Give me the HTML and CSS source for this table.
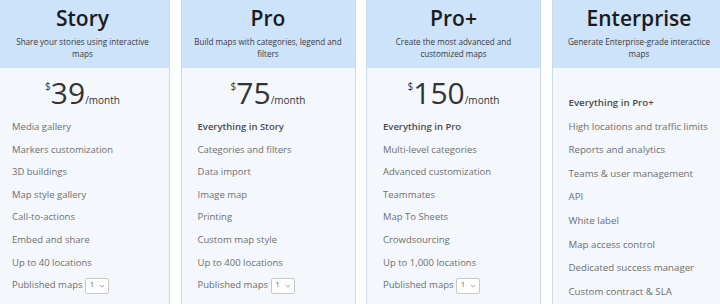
FILE: index.html
```html
<!DOCTYPE html>
<html>
<head>
<meta charset="utf-8">
<link rel="stylesheet" href="styles.css">
</head>
<body>
<div class="plans">
  <div class="card">
    <div class="head">
      <h2 class="title">Story</h2>
      <p class="sub">Share your stories using interactive maps</p>
    </div>
    <div class="body">
      <div class="price"><span class="cur">$</span><span class="amt">39</span><span class="per">/month</span></div>
      <ul class="feats">
        <li>Media gallery</li>
        <li>Markers customization</li>
        <li>3D buildings</li>
        <li>Map style gallery</li>
        <li>Call-to-actions</li>
        <li>Embed and share</li>
        <li>Up to 40 locations</li>
        <li>Published maps <span class="sel">1 <svg viewBox="0 0 8 5" width="6" height="4"><path d="M1 1l3 3 3-3" fill="none" stroke="#888" stroke-width="1"/></svg></span></li>
      </ul>
    </div>
  </div>
  <div class="card">
    <div class="head">
      <h2 class="title">Pro</h2>
      <p class="sub">Build maps with categories, legend and filters</p>
    </div>
    <div class="body">
      <div class="price"><span class="cur">$</span><span class="amt">75</span><span class="per">/month</span></div>
      <ul class="feats">
        <li class="strong">Everything in Story</li>
        <li>Categories and filters</li>
        <li>Data import</li>
        <li>Image map</li>
        <li>Printing</li>
        <li>Custom map style</li>
        <li>Up to 400 locations</li>
        <li>Published maps <span class="sel">1 <svg viewBox="0 0 8 5" width="6" height="4"><path d="M1 1l3 3 3-3" fill="none" stroke="#888" stroke-width="1"/></svg></span></li>
      </ul>
    </div>
  </div>
  <div class="card">
    <div class="head">
      <h2 class="title">Pro+</h2>
      <p class="sub">Create the most advanced and customized maps</p>
    </div>
    <div class="body">
      <div class="price"><span class="cur">$</span><span class="amt">150</span><span class="per">/month</span></div>
      <ul class="feats">
        <li class="strong">Everything in Pro</li>
        <li>Multi-level categories</li>
        <li>Advanced customization</li>
        <li>Teammates</li>
        <li>Map To Sheets</li>
        <li>Crowdsourcing</li>
        <li>Up to 1,000 locations</li>
        <li>Published maps <span class="sel">1 <svg viewBox="0 0 8 5" width="6" height="4"><path d="M1 1l3 3 3-3" fill="none" stroke="#888" stroke-width="1"/></svg></span></li>
      </ul>
    </div>
  </div>
  <div class="card">
    <div class="head">
      <h2 class="title">Enterprise</h2>
      <p class="sub">Generate Enterprise-grade interactice maps</p>
    </div>
    <div class="body">
      <ul class="feats ent">
        <li class="strong">Everything in Pro+</li>
        <li>High locations and traffic limits</li>
        <li>Reports and analytics</li>
        <li>Teams &amp; user management</li>
        <li>API</li>
        <li>White label</li>
        <li>Map access control</li>
        <li>Dedicated success manager</li>
        <li>Custom contract &amp; SLA</li>
      </ul>
    </div>
  </div>
</div>
</body>
</html>
```
FILE: styles.css
```css
html, body {
  margin: 0;
  padding: 0;
  background: #ffffff;
  font-family: "Open Sans", "Noto Sans", sans-serif;
  overflow: hidden;
}
.plans {
  display: grid;
  grid-template-columns: repeat(4, 175px);
  column-gap: 10.5px;
  margin-left: -5px;
  height: 304px;
}
.card {
  border-left: 1px solid #c9dcee;
  border-right: 1px solid #c9dcee;
  background: #f4f8fd;
  display: flex;
  flex-direction: column;
}
.head {
  background: #cce3fa;
  height: 68px;
  box-sizing: border-box;
  padding-top: 4px;
  text-align: center;
}
.title {
  margin: 0;
  font-size: 21px;
  font-weight: 600;
  color: #1b1b1b;
  line-height: 28px;
}
.sub {
  margin: 4px auto 0;
  font-size: 8.1px;
  line-height: 12px;
  color: #3a3a3a;
  width: 150px;
}
.body {
  padding: 0 10px 0 16px;
}
.price {
  text-align: center;
  color: #333;
  height: 48px;
  padding-top: 10px;
  box-sizing: border-box;
  margin-left: -6px;
}
.cur {
  font-size: 10px;
  vertical-align: top;
  position: relative;
  top: 1px;
}
.amt {
  font-size: 30px;
  line-height: 30px;
}
.per {
  font-size: 10px;
}
.feats {
  list-style: none;
  margin: 0;
  padding: 0;
}
.feats li {
  font-size: 9.5px;
  color: #6e6e6e;
  line-height: 22.6px;
  white-space: nowrap;
}
.feats li.strong {
  font-weight: 600;
  color: #4a4a4a;
}
.feats.ent {
  padding-top: 23px;
}
.feats.ent li {
  font-size: 9.7px;
  line-height: 23.6px;
}
.sel {
  display: inline-flex;
  align-items: center;
  gap: 5px;
  border: 1px solid #c8c8c8;
  border-radius: 2px;
  background: #fff;
  font-size: 7px;
  color: #555;
  height: 16px;
  padding: 0 3px 0 4px;
  vertical-align: middle;
  box-sizing: border-box;
}
```
